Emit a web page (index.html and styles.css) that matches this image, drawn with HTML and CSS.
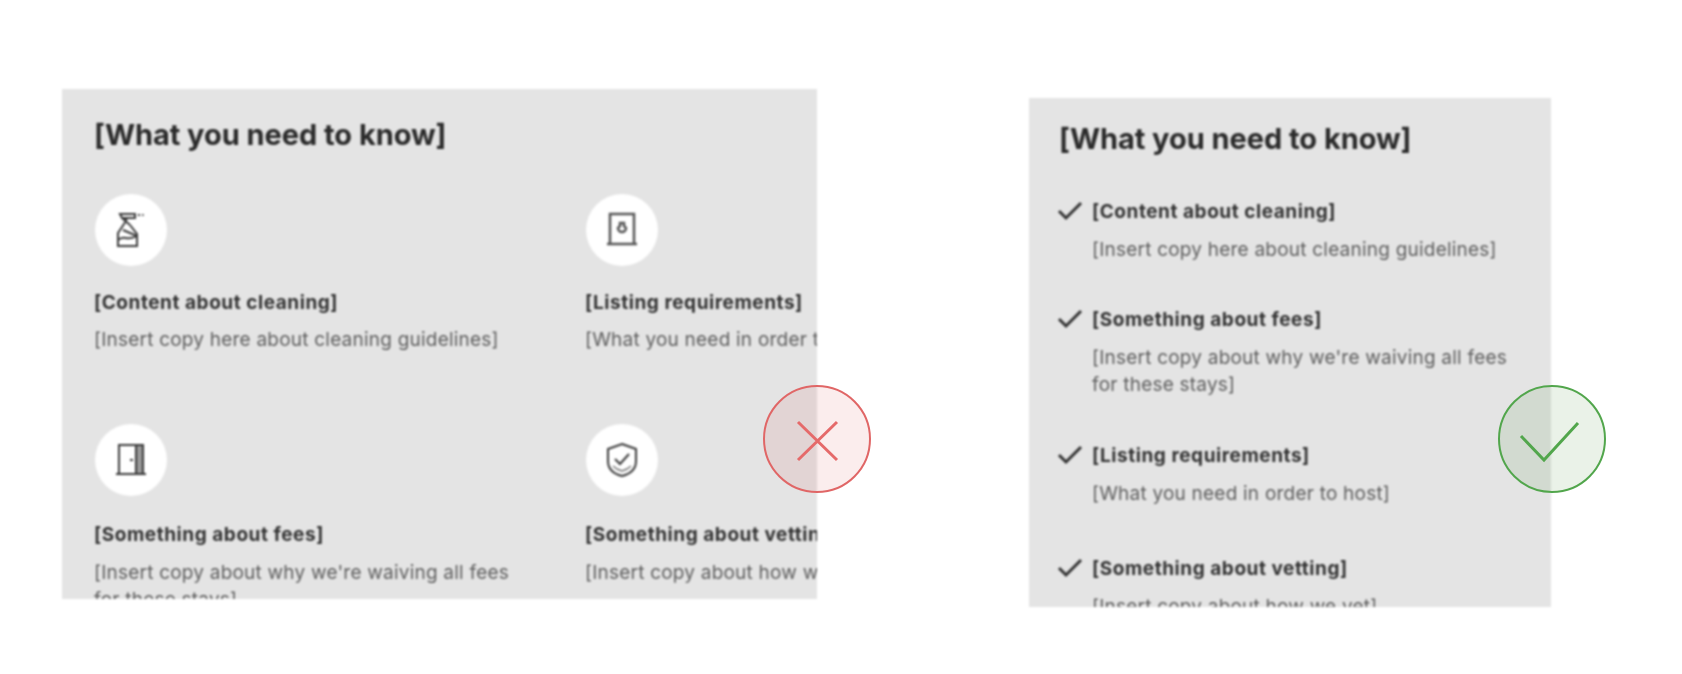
FILE: index.html
```html
<!DOCTYPE html>
<html lang="en">
<head>
    <meta charset="UTF-8">
    <meta name="viewport" content="width=device-width, initial-scale=1.0">
    <title>What you need to know</title>
    <link rel="stylesheet" href="styles.css">
</head>
<body>

    <div class="page">

        <div class="example example-bad">
            <div class="card">
                <h2>[What you need to know]</h2>
                <div class="grid">
                    <div class="item">
                        <div class="icon-circle">
                            <svg viewBox="0 0 36 36" class="icon">
                                <path d="M7 2h15v4H9z M9 6l8 7 M14 6l-3 6"/>
                                <path d="M11 12l-6 9v13h19V22l-7-9 M5 28c6-6 9 2 19-4 M10 18l14 6"/>
                                <path d="M25 3h2 M29 3h1.500"/>
                            </svg>
                        </div>
                        <h4>[Content about cleaning]</h4>
                        <p>[Insert copy here about cleaning guidelines]</p>
                    </div>
                    <div class="item">
                        <div class="icon-circle">
                            <svg viewBox="0 0 36 36" class="icon icon-grey">
                                <path d="M3 32h30 M6 32V2h24v30"/>
                                <path d="M16 11h4v3l2 2a4 4 0 1 1-8 0l2-2z"/>
                            </svg>
                        </div>
                        <h4>[Listing requirements]</h4>
                        <p>[What you need in order to host]</p>
                    </div>
                    <div class="item">
                        <div class="icon-circle">
                            <svg viewBox="0 0 36 36" class="icon">
                                <path class="icon-fill" d="M23 3h7v28h-7z"/>
                                <path d="M3 32h30 M6 32V3h24v29 M23 3v29"/>
                                <path d="M17 18h3"/>
                            </svg>
                        </div>
                        <h4>[Something about fees]</h4>
                        <p>[Insert copy about why we're waiving all fees for these stays]</p>
                    </div>
                    <div class="item">
                        <div class="icon-circle">
                            <svg viewBox="0 0 36 36" class="icon">
                                <path d="M18 2l14 5v12c0 8-6 13-14 15-8-2-14-7-14-15V7z"/>
                                <path d="M11 17l5 5 9-10"/>
                                <path class="icon-thin" d="M9 24c2 2 5 4 9 5 4-1 7-3 9-5"/>
                            </svg>
                        </div>
                        <h4>[Something about vetting]</h4>
                        <p>[Insert copy about how we vet]</p>
                    </div>
                </div>
            </div>
            <div class="badge badge-no">
                <svg viewBox="0 0 108 108"><path d="M35 37l39 38 M74 37L35 75"/></svg>
            </div>
        </div>

        <div class="example example-good">
            <div class="card">
                <h2>[What you need to know]</h2>
                <div class="list">
                    <div class="row">
                        <svg viewBox="0 0 26 20" class="check"><path d="M2 10l7 7L24 2"/></svg>
                        <div>
                            <h4>[Content about cleaning]</h4>
                            <p>[Insert copy here about cleaning guidelines]</p>
                        </div>
                    </div>
                    <div class="row">
                        <svg viewBox="0 0 26 20" class="check"><path d="M2 10l7 7L24 2"/></svg>
                        <div>
                            <h4>[Something about fees]</h4>
                            <p>[Insert copy about why we're waiving all fees for these stays]</p>
                        </div>
                    </div>
                    <div class="row">
                        <svg viewBox="0 0 26 20" class="check"><path d="M2 10l7 7L24 2"/></svg>
                        <div>
                            <h4>[Listing requirements]</h4>
                            <p>[What you need in order to host]</p>
                        </div>
                    </div>
                    <div class="row">
                        <svg viewBox="0 0 26 20" class="check"><path d="M2 10l7 7L24 2"/></svg>
                        <div>
                            <h4>[Something about vetting]</h4>
                            <p>[Insert copy about how we vet]</p>
                        </div>
                    </div>
                </div>
            </div>
            <div class="badge badge-yes">
                <svg viewBox="0 0 108 108"><path d="M23 51l23 24L80 38"/></svg>
            </div>
        </div>

    </div>

</body>
</html>
```

FILE: styles.css
```css
body {
    font-family: Inter, "Noto Sans", sans-serif;
    background-color: #fff;
    color: #333;
    margin: 0;
}
.page {
    display: flex;
    align-items: flex-start;
    height: 674px;
    overflow: hidden;
    padding-left: 62px;
    box-sizing: border-box;
}
.example {
    position: relative;
}
.example-bad {
    width: 755px;
    margin-top: 89px;
}
.example-good {
    width: 522px;
    margin-top: 98px;
    margin-left: 212px;
}
.card {
    background: #e4e4e4;
    overflow: hidden;
    box-sizing: border-box;
    filter: blur(0.9px);
}
.example-bad .card {
    height: 510px;
    padding: 28px 0 0 32px;
}
.example-good .card {
    height: 509px;
    padding: 23px 0 0 30px;
}
h2 {
    margin: 0;
    font-size: 29px;
    line-height: 36px;
    font-weight: 700;
    letter-spacing: -0.05px;
    color: #2b2b2b;
    white-space: nowrap;
}
h4 {
    margin: 0;
    font-size: 19px;
    line-height: 24px;
    font-weight: 700;
    letter-spacing: 0.55px;
    color: #333;
    white-space: nowrap;
}
p {
    margin: 12px 0 0;
    font-size: 19px;
    line-height: 27px;
    letter-spacing: 0.22px;
    color: #5e5e5e;
}
.grid {
    display: grid;
    grid-template-columns: 491px 491px;
    margin-top: 41px;
}
.item {
    height: 230px;
}
.item p {
    width: 430px;
    margin-top: 11px;
}
.item:nth-child(n+3) h4 {
    margin-top: 27px;
}
.item:nth-child(n+3) p {
    margin-top: 12px;
}
.icon-circle {
    width: 72px;
    height: 72px;
    margin-left: 1px;
    border-radius: 50%;
    background: #fff;
    display: flex;
    align-items: center;
    justify-content: center;
    margin-bottom: 25px;
}
.icon {
    width: 36px;
    height: 36px;
    fill: none;
    stroke: #3a3a3a;
    stroke-width: 2;
}
.icon-grey {
    stroke: #555;
    stroke-width: 2.5;
}
.icon-fill {
    fill: #999;
    stroke: none;
}
.icon-thin {
    stroke-width: 1.5;
    stroke: #777;
}
.list {
    margin-top: 43px;
}
.row {
    display: flex;
    gap: 9px;
    margin-bottom: 45px;
}
.row:nth-child(2) {
    margin-bottom: 46px;
}
.row:nth-child(3) {
    margin-bottom: 50px;
}
.row p {
    width: 420px;
}
.check {
    width: 26px;
    height: 20px;
    margin-top: 1px;
    margin-left: -2px;
    flex-shrink: 0;
    fill: none;
    stroke: #333;
    stroke-width: 3;
}
.badge {
    position: absolute;
    width: 108px;
    height: 108px;
    box-sizing: border-box;
    border-radius: 50%;
    border: 2px solid;
    filter: blur(0.6px);
}
.badge svg {
    position: absolute;
    top: -2px;
    left: -2px;
    width: 108px;
    height: 108px;
    fill: none;
    stroke-width: 3;
}
.badge-no {
    right: -54px;
    top: 296px;
    border-color: #e06666;
    background: rgba(210, 50, 50, 0.09);
}
.badge-no svg {
    stroke: #e56a6a;
}
.badge-yes {
    right: -55px;
    top: 287px;
    border-color: #52a64c;
    background: rgba(60, 140, 50, 0.11);
}
.badge-yes svg {
    stroke: #52a64c;
}
```
